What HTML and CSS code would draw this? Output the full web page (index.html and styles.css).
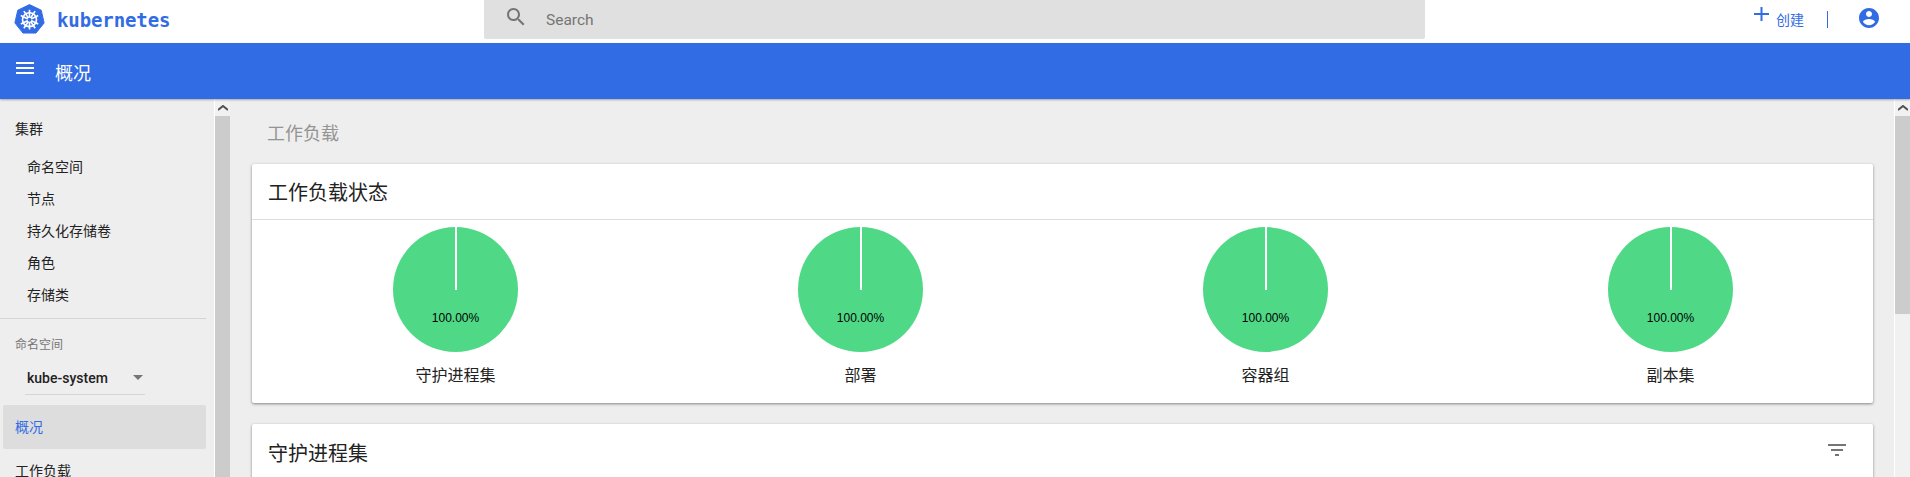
FILE: index.html
```html
<!DOCTYPE html>
<html lang="en">
<head>
  <meta charset="UTF-8" />
  <title>Kubernetes Dashboard</title>
  <link rel="stylesheet" href="styles.css">
</head>
<body>
  <header class="topbar">
    <div class="brand">
      <svg class="logo" viewBox="0 0 32 32" width="31" height="31">
        <path d="M16 .6l12.100 5.800 3 13.100-8.400 10.500H9.300L.9 19.500l3-13.100z" fill="#326ce5" stroke="#326ce5" stroke-linejoin="round"/>
        <g fill="none" stroke="#fff" stroke-width="1.700">
          <circle cx="16" cy="16.200" r="7.200"/>
          <path d="M16 6v20.400M7 11.800l18 8.800M25 11.800L7 20.600M10.200 25l11.600-17.600M21.800 25L10.200 7.400"/>
        </g>
        <circle cx="16" cy="16.200" r="2" fill="#326ce5"/>
      </svg>
      <span class="brand-name">kubernetes</span>
    </div>
    <div class="search">
      <svg class="search-icon" viewBox="0 0 24 24" width="24" height="24">
        <path d="M15.500 14h-.79l-.28-.27C15.410 12.590 16 11.110 16 9.500 16 5.910 13.090 3 9.500 3S3 5.910 3 9.500 5.910 16 9.500 16c1.610 0 3.090-.59 4.230-1.570l.27.28v.79l5 4.990L20.490 19l-4.990-5zm-6 0C7.010 14 5 11.990 5 9.500S7.010 5 9.500 5 14 7.010 14 9.500 11.990 14 9.500 14z" fill="#757575"/>
      </svg>
      <span class="search-text">Search</span>
    </div>
    <div class="actions">
      <svg class="plus" viewBox="0 0 15 14" width="15" height="14">
        <path d="M6.500 0h2v6H15v2H8.500v6h-2V8H0V6h6.500z" fill="#326ce5"/>
      </svg>
      <span class="create">创建</span>
      <span class="divider"></span>
      <svg class="account" viewBox="0 0 24 24" width="24" height="24">
        <path d="M12 2C6.480 2 2 6.480 2 12s4.480 10 10 10 10-4.480 10-10S17.520 2 12 2zm0 3c1.660 0 3 1.340 3 3s-1.340 3-3 3-3-1.340-3-3 1.340-3 3-3zm0 14.200c-2.500 0-4.710-1.280-6-3.220.03-1.990 4-3.080 6-3.080 1.990 0 5.970 1.090 6 3.080-1.290 1.940-3.500 3.220-6 3.220z" fill="#326ce5"/>
      </svg>
    </div>
  </header>

  <div class="toolbar">
    <svg class="menu" viewBox="0 0 18 12" width="18" height="12">
      <path d="M0 0h18v2H0zM0 5h18v2H0zM0 10h18v2H0z" fill="#fff"/>
    </svg>
    <span class="toolbar-title">概况</span>
  </div>

  <div class="layout">
    <nav class="sidebar">
      <div class="nav-head">集群</div>
      <a class="nav-sub">命名空间</a>
      <a class="nav-sub">节点</a>
      <a class="nav-sub">持久化存储卷</a>
      <a class="nav-sub">角色</a>
      <a class="nav-sub">存储类</a>
      <hr class="nav-line">
      <div class="ns-label">命名空间</div>
      <div class="ns-select">
        <span>kube-system</span>
        <i class="caret"></i>
      </div>
      <div class="nav-active">概况</div>
      <div class="nav-head nav-next">工作负载</div>
    </nav>
    <div class="scrollbar side-scroll">
      <div class="scroll-btn"><svg viewBox="0 0 10 6" width="10" height="6"><path d="M0 5l5-4 5 4" fill="none" stroke="#505050" stroke-width="2"/></svg></div>
      <div class="thumb"></div>
    </div>

    <main class="content">
      <h1 class="page-title">工作负载</h1>
      <section class="card status-card">
        <div class="card-head">工作负载状态</div>
        <div class="charts">
          <div class="chart">
            <div class="pie"><span>100.00%</span></div>
            <div class="chart-name">守护进程集</div>
          </div>
          <div class="chart">
            <div class="pie"><span>100.00%</span></div>
            <div class="chart-name">部署</div>
          </div>
          <div class="chart">
            <div class="pie"><span>100.00%</span></div>
            <div class="chart-name">容器组</div>
          </div>
          <div class="chart">
            <div class="pie"><span>100.00%</span></div>
            <div class="chart-name">副本集</div>
          </div>
        </div>
      </section>
      <section class="card">
        <div class="card-head list-head">
          <span class="list-title">守护进程集</span>
          <svg class="filter" viewBox="0 0 18 12" width="18" height="12">
            <path d="M0 0h18v2H0zM3 5h12v2H3zM7 10h4v2H7z" fill="#757575"/>
          </svg>
        </div>
      </section>
    </main>
    <div class="scrollbar main-scroll">
      <div class="scroll-btn"><svg viewBox="0 0 10 6" width="10" height="6"><path d="M0 5l5-4 5 4" fill="none" stroke="#505050" stroke-width="2"/></svg></div>
      <div class="thumb"></div>
    </div>
  </div>
</body>
</html>
```

FILE: styles.css
```css
html, body {
  margin: 0;
  padding: 0;
  height: 477px;
  overflow: hidden;
}
body {
  font-family: Roboto, "Noto Sans CJK SC", sans-serif;
  background: #eee;
  color: #222;
}

/* top bar */
.topbar {
  height: 43px;
  background: #fff;
  display: flex;
  position: relative;
}
.brand {
  width: 484px;
  display: flex;
  align-items: center;
  padding-left: 14px;
  box-sizing: border-box;
}
.logo {
  margin-top: -5px;
}
.brand-name {
  font-family: "DejaVu Sans Mono", monospace;
  font-size: 19px;
  font-weight: bold;
  color: #326ce5;
  margin: -4px 0 0 12px;
  letter-spacing: -.1px;
}
.search {
  width: 941px;
  height: 39px;
  background: #e0e0e0;
  border-radius: 0 0 2px 2px;
  display: flex;
  align-items: center;
}
.search-icon {
  margin-left: 20px;
  margin-top: -6px;
}
.search-text {
  font-size: 15.500px;
  color: #757575;
  margin-left: 18px;
}
.actions {
  flex: 1;
  display: flex;
  align-items: center;
  padding-left: 329px;
}
.plus {
  margin-top: -16px;
}
.create {
  font-size: 14px;
  color: #326ce5;
  margin: -6px 0 0 7px;
}
.divider {
  width: 1px;
  height: 17px;
  background: #326ce5;
  margin: -4px 0 0 23px;
}
.account {
  margin-left: 29px;
  margin-top: -7px;
}

/* blue bar */
.toolbar {
  height: 56px;
  background: #326ce5;
  display: flex;
  align-items: center;
  box-shadow: 0 1px 2px rgba(0, 0, 0, .3);
  position: relative;
}
.menu {
  margin-left: 16px;
  margin-top: -7px;
}
.toolbar-title {
  color: #fff;
  font-size: 18px;
  margin: 2px 0 0 21px;
}

.layout {
  display: flex;
  height: 378px;
  overflow: hidden;
}

/* sidebar */
.sidebar {
  width: 214px;
  box-sizing: border-box;
  flex-shrink: 0;
}
.nav-head {
  font-size: 14px;
  line-height: 20px;
  padding: 20px 0 0 15px;
}
.nav-sub {
  display: block;
  font-size: 14px;
  line-height: 32px;
  padding-left: 27px;
}
.nav-head + .nav-sub {
  margin-top: 12px;
}
.nav-line {
  border: 0;
  border-top: 1px solid #d5d5d5;
  margin: 7px 8px 0 0;
}
.ns-label {
  font-size: 12px;
  color: #757575;
  padding: 18px 0 0 15px;
  line-height: 16px;
}
.ns-select {
  width: 118px;
  margin: 17px 0 0 25px;
  padding-left: 2px;
  height: 24px;
  border-bottom: 1px solid #d5d5d5;
  font-size: 14px;
  font-weight: 500;
  position: relative;
}
.caret {
  position: absolute;
  right: 2px;
  top: 5px;
  border: 5px solid transparent;
  border-top: 5px solid #757575;
  border-bottom: 0;
}
.nav-active {
  margin: 10px 8px 0 3px;
  height: 44px;
  line-height: 44px;
  padding-left: 12px;
  background: #ddd;
  border-radius: 2px;
  font-size: 14px;
  color: #326ce5;
}
.nav-next {
  padding-top: 12px;
}

/* scrollbars */
.scrollbar {
  width: 15px;
  flex-shrink: 0;
  background: #f1f1f1;
  border-left: 1px solid #fff;
}
.scroll-btn {
  height: 17px;
  display: flex;
  align-items: center;
  justify-content: center;
}
.side-scroll .thumb {
  height: 361px;
  background: #ccc;
}
.main-scroll .thumb {
  height: 198px;
  background: #ccc;
}

/* main area */
.content {
  flex: 1;
  min-width: 0;
  padding: 0 21px 0 22px;
}
.page-title {
  font-size: 18px;
  font-weight: normal;
  color: #949494;
  margin: 0;
  padding-left: 15px;
  height: 65px;
  line-height: 69px;
}
.card {
  background: #fff;
  border-radius: 2px;
  box-shadow: 0 1px 3px rgba(0, 0, 0, .45);
  margin-bottom: 21px;
}
.status-card {
  height: 239px;
}
.card-head {
  height: 56px;
  line-height: 58px;
  padding: 0 16px;
  font-size: 20px;
  border-bottom: 1px solid #ddd;
  box-sizing: border-box;
}
.list-head {
  display: flex;
  align-items: center;
  justify-content: space-between;
  border-bottom: 0;
  padding-right: 27px;
}
.list-title {
  margin-top: 3px;
}
.filter {
  margin-top: -4px;
}
.charts {
  display: grid;
  grid-template-columns: repeat(4, 1fr);
  padding: 7px 0 0 1px;
}
.chart {
  text-align: center;
}
.pie {
  width: 125px;
  height: 125px;
  border-radius: 50%;
  background: #4fd987;
  margin: 0 auto;
  position: relative;
}
.pie::before {
  content: "";
  position: absolute;
  left: 62px;
  top: 0;
  width: 1.500px;
  height: 63px;
  background: #fff;
}
.pie span {
  position: absolute;
  left: 0;
  right: 0;
  top: 83px;
  font-family: "Liberation Sans", sans-serif;
  font-size: 12px;
  line-height: 16px;
  color: #000;
}
.chart-name {
  font-size: 16px;
  margin-top: 12px;
  line-height: 24px;
}
```
